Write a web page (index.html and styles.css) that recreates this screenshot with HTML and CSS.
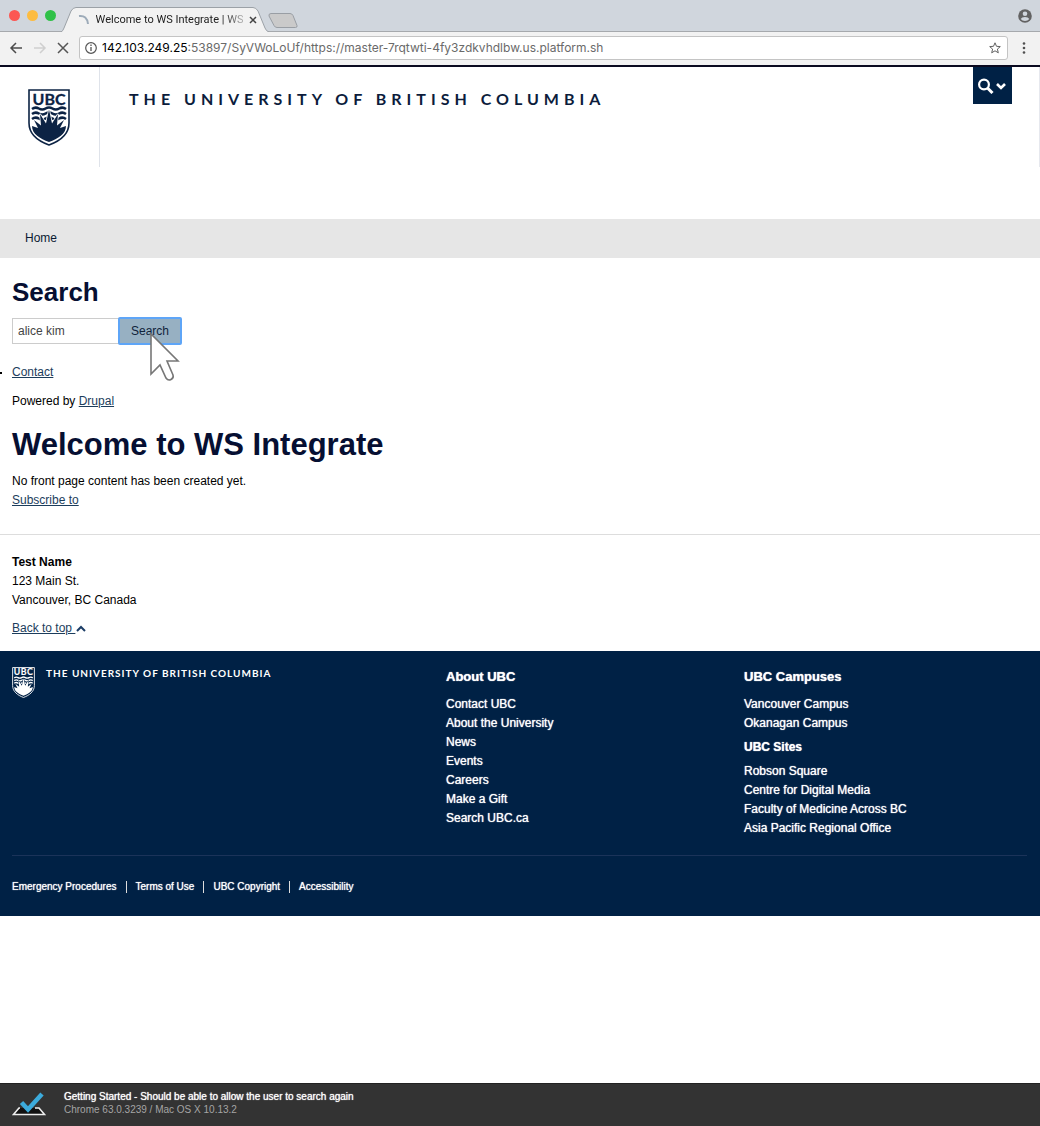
FILE: index.html
```html
<!DOCTYPE html>
<html lang="en">
<head>
<meta charset="utf-8">
<meta name="viewport" content="width=device-width, initial-scale=1">
<title>Welcome to WS Integrate | WS Integrate</title>
<link rel="stylesheet" href="styles.css">
</head>
<body>
<header class="browser">
  <div class="tabstrip">
    <div class="lights"><span class="light red"></span><span class="light amber"></span><span class="light green"></span></div>
    <div class="tab">
      <svg class="tab-shape" viewBox="0 0 208 25" preserveAspectRatio="none" aria-hidden="true"><path d="M0 25Q2 24 3 21L10 4Q12 .5 15 .5H192Q195 .5 197 4L204 21Q205 24 208 25" fill="#f2f2f2" stroke="#9ba1a7"/></svg>
      <svg class="spinner" width="12" height="12" viewBox="0 0 12 12" aria-hidden="true"><path d="M1 2q8-1 9 8" fill="none" stroke="#9dabb9" stroke-width="2"/></svg>
      <span class="tab-title">Welcome to WS Integrate | WS</span>
      <button class="icon-button" aria-label="Close tab"><svg width="8" height="8" viewBox="0 0 8 8"><path d="M1 1l6 6M7 1L1 7" stroke="#444" stroke-width="1.500"/></svg></button>
    </div>
    <button class="icon-button new-tab" aria-label="New tab"><svg width="30" height="15" viewBox="0 0 30 15"><path d="M3 .5h19q2 0 3 2l4 10q.5 2-1.500 2H9q-2 0-3-2L1 3Q.5 .500 3 .500z" fill="#cacaca" stroke="#999ea4"/></svg></button>
    <button class="icon-button profile" aria-label="Profile"><svg width="14" height="14" viewBox="0 0 14 14"><circle cx="7" cy="7" r="6.800" fill="#626262"/><circle cx="7" cy="4.800" r="2.300" fill="#d0d6dd"/><path d="M2.700 10q1-2 4.300-2t4.300 2q-1.600 2-4.300 2t-4.300-2z" fill="#d0d6dd"/></svg></button>
  </div>
  <div class="toolbar">
    <button class="icon-button" aria-label="Back"><svg width="14" height="12" viewBox="0 0 14 12"><path d="M13 6H2M7 1L2 6l5 5" fill="none" stroke="#4c4c4c" stroke-width="1.500"/></svg></button>
    <button class="icon-button" aria-label="Forward" disabled><svg width="14" height="12" viewBox="0 0 14 12"><path d="M1 6h11M7 1l5 5-5 5" fill="none" stroke="#cfcfcf" stroke-width="1.500"/></svg></button>
    <button class="icon-button" aria-label="Stop"><svg width="12" height="12" viewBox="0 0 12 12"><path d="M1 1l10 10M11 1L1 11" stroke="#555" stroke-width="1.500"/></svg></button>
    <div class="address">
      <svg width="12" height="12" viewBox="0 0 12 12" aria-hidden="true"><circle cx="6" cy="6" r="5.300" fill="none" stroke="#555" stroke-width="1.200"/><path d="M6 5v4M6 2.600v1.400" stroke="#555" stroke-width="1.300"/></svg>
      <span class="url"><b>142.103.249.25</b>:53897/SyVWoLoUf/https://master-7rqtwti-4fy3zdkvhdlbw.us.platform.sh</span>
      <button class="icon-button" aria-label="Bookmark"><svg width="12" height="12" viewBox="0 0 12 12"><path d="M6 .8l1.500 3.500 3.800.3-2.900 2.500.9 3.700L6 8.800l-3.300 2 .9-3.700L.7 4.600l3.800-.3z" fill="none" stroke="#606060"/></svg></button>
    </div>
    <button class="icon-button" aria-label="Menu"><svg width="4" height="12" viewBox="0 0 4 12" fill="#505050"><circle cx="2" cy="1.500" r="1.300"/><circle cx="2" cy="6" r="1.300"/><circle cx="2" cy="10.500" r="1.300"/></svg></button>
  </div>
</header>

<div class="masthead">
  <a class="logo" href="#" aria-label="UBC">
    <svg class="crest" width="42" height="57" viewBox="0 0 42 57">
      <g id="crest">
        <path class="crest-field" d="M1 1h40v33c0 11-9 18-20 22C10 52 1 45 1 34z" stroke-width="1.600"/>
        <text class="crest-text" x="21" y="15.500" text-anchor="middle" font-size="16" stroke-width=".3">UBC</text>
        <path class="crest-wave" fill="none" stroke-width="2.500" d="M4 20q3.400-2.500 6.800-.5t6.800 0 6.800 0 6.800 0 6.800 .5M4 25q3.400-2.500 6.800-.5t6.800 0 6.800 0 6.800 0 6.800 .5M4 30q3.400-2.500 6.800-.5t6.800 0 6.800 0 6.800 0 6.800 .5"/>
        <path class="crest-sun" stroke-width="1.600" d="M4 37l6 2-4-8 7 5.500-1-11.500 6 9.500 3-14 3 14 6-9.500-1 11.500 7-5.500-4 8 6-2c0 8-8 12.500-17 16C12 49.500 4 45 4 37z"/>
      </g>
    </svg>
  </a>
  <a class="wordmark" href="#">THE UNIVERSITY OF BRITISH COLUMBIA</a>
  <button class="search-toggle" aria-label="Search UBC">
    <svg width="28" height="16" viewBox="0 0 28 16" fill="none" stroke="#fff"><circle cx="6" cy="6.500" r="4.900" stroke-width="2.200"/><path d="M9.500 10l5 5" stroke-width="3"/><path d="M19 6l4 4 4-4" stroke-width="2.600"/></svg>
  </button>
</div>

<nav class="site-nav"><a href="#">Home</a></nav>

<main class="content">
  <h2>Search</h2>
  <form class="search-form">
    <input type="text" value="alice kim" aria-label="Search terms">
    <button type="button">Search
      <svg class="pointer" width="32" height="51" viewBox="0 0 32 51" aria-hidden="true"><path d="M2 2v40l9-9 6 13q2 3 5 1.500t2-4.500L18 29h11z" fill="#fff" stroke="#777" stroke-width="1.600"/></svg>
    </button>
  </form>
  <ul class="menu"><li><a href="#">Contact</a></li></ul>
  <p class="powered">Powered by <a href="#">Drupal</a></p>
  <h1>Welcome to WS Integrate</h1>
  <p>No front page content has been created yet.</p>
  <p><a href="#">Subscribe to</a></p>
</main>

<section class="unit">
  <address><strong>Test Name</strong><br>123 Main St.<br>Vancouver, BC Canada</address>
  <a class="to-top" href="#">Back to top <svg width="10" height="7" viewBox="0 0 10 7" aria-hidden="true"><path d="M1 6l4-4 4 4" fill="none" stroke="#1c3d66" stroke-width="2"/></svg></a>
</section>

<footer class="footer">
  <div class="footer-columns">
    <div class="footer-brand">
      <svg class="crest crest-light" width="23" height="31" viewBox="0 0 42 57" aria-hidden="true"><use href="#crest"/></svg>
      <a href="#">THE UNIVERSITY OF BRITISH COLUMBIA</a>
    </div>
    <div>
      <h3>About UBC</h3>
      <ul>
        <li><a href="#">Contact UBC</a></li>
        <li><a href="#">About the University</a></li>
        <li><a href="#">News</a></li>
        <li><a href="#">Events</a></li>
        <li><a href="#">Careers</a></li>
        <li><a href="#">Make a Gift</a></li>
        <li><a href="#">Search UBC.ca</a></li>
      </ul>
    </div>
    <div>
      <h3>UBC Campuses</h3>
      <ul>
        <li><a href="#">Vancouver Campus</a></li>
        <li><a href="#">Okanagan Campus</a></li>
      </ul>
      <h4>UBC Sites</h4>
      <ul>
        <li><a href="#">Robson Square</a></li>
        <li><a href="#">Centre for Digital Media</a></li>
        <li><a href="#">Faculty of Medicine Across BC</a></li>
        <li><a href="#">Asia Pacific Regional Office</a></li>
      </ul>
    </div>
  </div>
  <ul class="legal">
    <li><a href="#">Emergency Procedures</a></li>
    <li><a href="#">Terms of Use</a></li>
    <li><a href="#">UBC Copyright</a></li>
    <li><a href="#">Accessibility</a></li>
  </ul>
</footer>

<aside class="testbar">
  <svg width="34" height="24" viewBox="0 0 34 24" aria-hidden="true"><path d="M8 16h-1L1.500 22.500h31L27 16h-4" fill="#111" stroke="#eee" stroke-width="1.600"/><path d="M9.500 10.500l6.500 7L30 2" fill="none" stroke="#3cabdc" stroke-width="4.500"/></svg>
  <div><p class="test-name">Getting Started - Should be able to allow the user to search again</p><p class="test-env">Chrome 63.0.3239 / Mac OS X 10.13.2</p></div>
</aside>
</body>
</html>
```
FILE: styles.css
```css
* { box-sizing: border-box; }
body {
  margin: 0;
  min-height: 100vh;
  display: flex;
  flex-direction: column;
  background: #fff;
  color: #000;
  font: 12px/19px "Liberation Sans", Arial, sans-serif;
}
h1, h2, h3, h4, p, ul { margin: 0; padding: 0; }
a { color: #1c3d5c; }
svg { display: block; flex: none; }
.icon-button { display: flex; padding: 0; border: 0; background: none; }

/* Browser window */
.browser { border-bottom: 2px solid #0a0a20; background: #f2f2f2; }
.tabstrip {
  height: 32px;
  display: flex;
  align-items: center;
  padding: 0 8px 0 9px;
  background: #d0d6dd;
  border-bottom: 1px solid #a6a9ad;
}
.lights { display: flex; gap: 7px; }
.light { width: 11px; height: 11px; border-radius: 50%; }
.red { background: #fc5753; }
.amber { background: #fdbc40; }
.green { background: #30c148; }
.tab {
  position: relative;
  align-self: flex-end;
  width: 208px;
  height: 25px;
  margin: 0 0 -1px 5px;
  padding: 0 12px 0 17px;
  display: flex;
  align-items: center;
  justify-content: space-between;
}
.tab-shape { position: absolute; inset: 0; width: 100%; height: 100%; }
.spinner, .tab-title, .tab .icon-button { position: relative; }
.tab-title {
  white-space: nowrap;
  font: 11px/16px Roboto, sans-serif;
  color: #222;
  mask-image: linear-gradient(90deg, #000 86%, rgba(0, 0, 0, .3));
}
.new-tab { margin: 9px 0 0 -1px; align-self: flex-start; padding-top: 4px; }
.profile { margin-left: auto; }
.toolbar { display: flex; align-items: center; gap: 10px; padding: 4px 14px 5px 9px; }
.address {
  flex: 1;
  height: 24px;
  margin-right: 4px;
  display: flex;
  align-items: center;
  gap: 5px;
  padding: 0 6px 0 5px;
  border: 1px solid #c4c4c4;
  border-radius: 3px;
  background: #fff;
}
.url { flex: 1; font: 12px/16px Inter, sans-serif; color: #6a6a6a; }
.url b { font-weight: 400; color: #000; }

/* Masthead */
.crest { --ink: #0c2344; --paper: #fff; }
.crest-light { --ink: #fff; --paper: #002145; }
.crest-field { fill: var(--paper); stroke: var(--ink); }
.crest-text { fill: var(--ink); stroke: var(--ink); font-family: Lato, sans-serif; font-weight: 700; }
.crest-wave { stroke: var(--ink); }
.crest-sun { fill: var(--ink); stroke: var(--paper); paint-order: stroke; }
.masthead {
  display: flex;
  align-items: flex-start;
  min-height: 100px;
  padding-right: 27px;
  margin-bottom: 52px;
  border-right: 1px solid #e6e8ee;
}
.logo { width: 100px; height: 100px; padding: 22px 0 0 28px; border-right: 1px solid #dfe3ea; }
.wordmark {
  padding: 22px 0 0 29px;
  font: 700 16px/20px Lato, sans-serif;
  letter-spacing: 5px;
  color: #0c1c3c;
  text-decoration: none;
}
.search-toggle { margin-left: auto; width: 39px; height: 37px; padding: 0 5px; border: 0; background: #002145; }
.site-nav { padding: 10px 25px; background: #e6e6e6; }
.site-nav a { color: #0a1a33; text-decoration: none; }

/* Content */
.content { padding: 18px 12px 24px; border-bottom: 1px solid #ddd; }
h1, h2 { color: #060f32; }
h2 { font-size: 26px; line-height: 32px; margin-bottom: 10px; }
h1 { font-size: 31px; line-height: 40px; margin: 14px 0 7px; }
.search-form { display: flex; margin-bottom: 19px; }
.search-form input {
  width: 107px;
  height: 26px;
  padding: 0 5px;
  border: 1px solid #ccc;
  border-right: 0;
  font: inherit;
  color: #444;
}
.search-form button {
  position: relative;
  width: 62px;
  padding: 0;
  border: 0;
  background: #97b0c2;
  outline: 2px solid #5ea5f7;
  outline-offset: -1px;
  border-radius: 1px;
  font: inherit;
  color: #10233a;
}
.pointer { position: absolute; left: 30px; top: 14px; }
.menu { list-style: none; }
.menu li::before { content: ""; float: left; width: 2px; height: 2px; margin: 9px 0 0 -12px; background: #000; }
.powered { margin-top: 10px; }
.unit { padding: 18px 12px 13px; }
address { font-style: normal; }
.to-top { display: inline-block; margin-top: 9px; }
.to-top svg { display: inline; margin-left: 1px; }

/* Footer */
.footer { padding: 0 13px 20px 12px; background: #002145; color: #fff; }
.footer a { color: #fff; text-decoration: none; }
.footer ul { list-style: none; text-shadow: 0 0 1px #fff; }
.footer-columns {
  display: grid;
  grid-template-columns: 434px 298px 1fr;
  padding: 16px 0 17px;
  border-bottom: 1px solid #1b3359;
}
.footer-brand { display: flex; align-items: flex-start; gap: 11px; font: 700 10px/13px Lato, sans-serif; letter-spacing: 1px; }
h3 { font-size: 13px; line-height: 20px; margin-bottom: 8px; text-shadow: 0 0 1px #fff; }
h4 { font-size: 12px; line-height: 19px; margin: 5px 0; text-shadow: 0 0 1px #fff; }
.legal { display: flex; padding-top: 21px; font-size: 10px; }
.legal li { display: flex; align-items: center; }
.legal li + li::before { content: ""; width: 1px; height: 12px; margin: 0 9px; background: #ddd; }

/* Test status bar */
.testbar {
  margin-top: auto;
  display: flex;
  align-items: flex-end;
  gap: 18px;
  padding: 6px 12px 10px;
  background: #333;
  border-top: 1px solid #222;
  color: #fff;
  font: 10px/13px "Liberation Sans", Arial, sans-serif;
}
.test-name { text-shadow: 0 0 1px #fff; }
.test-env { color: #a5a5a5; }
```
